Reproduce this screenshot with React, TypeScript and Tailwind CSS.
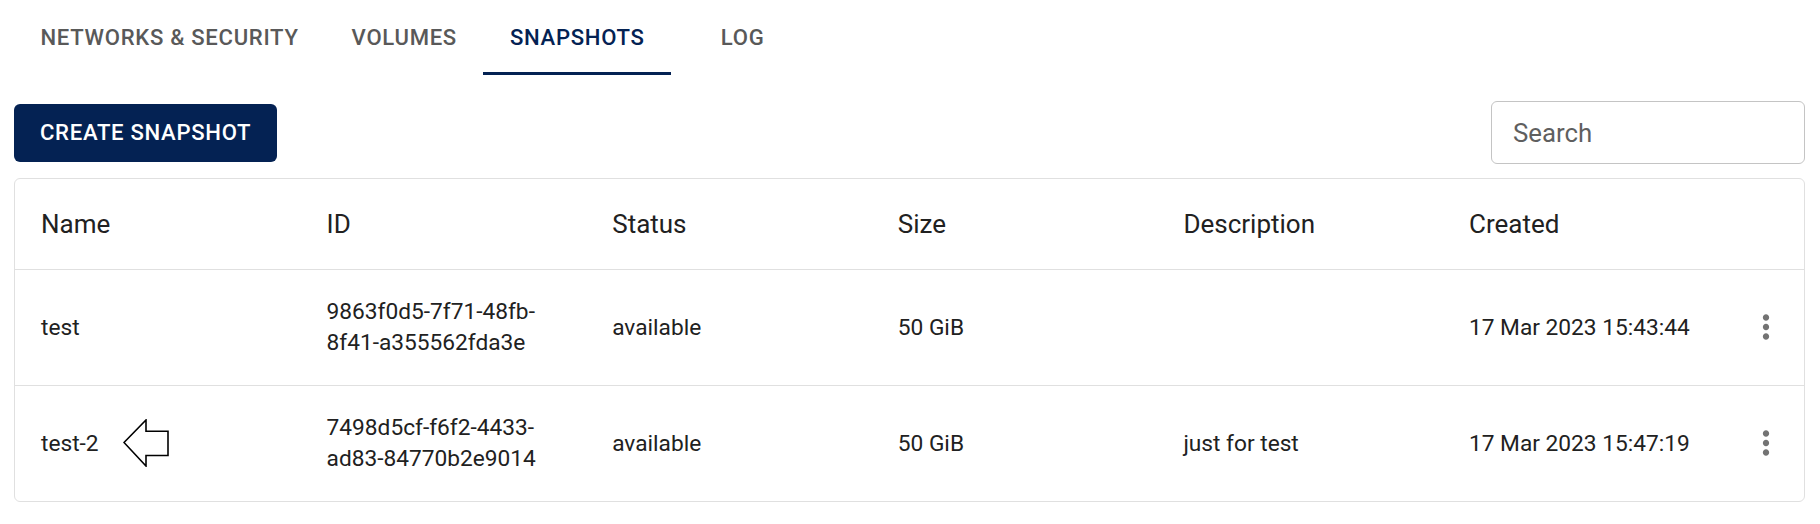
import { useState } from "react";

type Snapshot = {
  name: string;
  id: string;
  status: string;
  size: string;
  description: string;
  created: string;
  marked?: boolean;
};

const TABS = ["Networks & Security", "Volumes", "Snapshots", "Log"];

const COLUMNS = ["Name", "ID", "Status", "Size", "Description", "Created"];

const SNAPSHOTS: Snapshot[] = [
  {
    name: "test",
    id: "9863f0d5-7f71-48fb-8f41-a355562fda3e",
    status: "available",
    size: "50 GiB",
    description: "",
    created: "17 Mar 2023 15:43:44",
  },
  {
    name: "test-2",
    id: "7498d5cf-f6f2-4433-ad83-84770b2e9014",
    status: "available",
    size: "50 GiB",
    description: "just for test",
    created: "17 Mar 2023 15:47:19",
    marked: true,
  },
];

// let the long ids wrap after any hyphen
const breakable = (id: string) =>
  id.split("-").map((part, i, arr) => (
    <span key={i}>
      {part}
      {i < arr.length - 1 && (
        <>
          -<wbr />
        </>
      )}
    </span>
  ));

const ArrowMark = () => (
  <svg width="46" height="48" viewBox="0 0 46 48" className="shrink-0">
    <polygon
      points="1,23.5 23,1 23,12.3 45,12.3 45,36.5 23,36.5 23,47"
      fill="white"
      stroke="black"
      strokeWidth="1.6"
      strokeLinejoin="miter"
    />
  </svg>
);

const MoreVert = () => (
  <svg width="38" height="38" viewBox="0 0 24 24" fill="#737373">
    <path d="M12 8c1.1 0 2-.9 2-2s-.9-2-2-2-2 .9-2 2 .9 2 2 2zm0 2c-1.1 0-2 .9-2 2s.9 2 2 2 2-.9 2-2-.9-2-2-2zm0 6c-1.1 0-2 .9-2 2s.9 2 2 2 2-.9 2-2-.9-2-2-2z" />
  </svg>
);

const cell = "px-[26px] py-[26px] text-[22.7px] leading-[31.4px]";

export default function App() {
  const [tab, setTab] = useState("Snapshots");
  const [query, setQuery] = useState("");

  return (
    <div
      className="w-[1820px] h-[524px] bg-white pl-[14px] pr-[15px] text-[#212121]"
      style={{ fontFamily: "Roboto, 'Liberation Sans', sans-serif" }}
    >
      {/* Tabs */}
      <div className="flex h-[75px]">
        {TABS.map((t) => {
          const active = t === tab;
          return (
            <button
              key={t}
              onClick={() => setTab(t)}
              className={
                "relative min-w-[143px] px-[26.5px] flex items-center justify-center text-[22.1px] font-medium uppercase tracking-[0.7px] " +
                (active ? "text-[#042253]" : "text-[#595959]")
              }
            >
              {t}
              {active && <span className="absolute left-0 right-0 bottom-0 h-[3px] bg-[#042253]" />}
            </button>
          );
        })}
      </div>

      {/* Toolbar */}
      <div className="mt-[26px] flex items-center justify-between h-[63px]">
        <button className="h-[58px] px-[26px] rounded-[6px] bg-[#042253] text-white text-[22.1px] font-medium uppercase tracking-[0.7px] flex items-center">
          Create Snapshot
        </button>
        <input
          value={query}
          onChange={(e) => setQuery(e.target.value)}
          placeholder="Search"
          className="w-[314px] h-[63px] rounded-[6px] border border-[#c4c4c4] px-[21px] text-[25.8px] text-[#212121] placeholder:text-[#5f5f5f] outline-none"
        />
      </div>

      {/* Table */}
      <div className="mt-[14px] border border-[#e0e0e0] rounded-[6px] overflow-hidden">
        <table className="w-full table-fixed border-collapse">
          <colgroup>
            {COLUMNS.map((c) => (
              <col key={c} className="w-[285.6px]" />
            ))}
            <col />
          </colgroup>
          <thead>
            <tr className="border-b border-[#e0e0e0]">
              {COLUMNS.map((c) => (
                <th key={c} className="px-[26px] py-[26px] text-left text-[26px] leading-[38px] font-normal text-[#212121]">
                  {c}
                </th>
              ))}
              <th />
            </tr>
          </thead>
          <tbody>
            {SNAPSHOTS.map((s, i) => (
              <tr key={s.id} className={i < SNAPSHOTS.length - 1 ? "border-b border-[#e0e0e0]" : ""}>
                <td className={cell}>
                  <div className="flex items-center gap-[24px]">
                    <span>{s.name}</span>
                    {s.marked && <ArrowMark />}
                  </div>
                </td>
                <td className={cell}>{breakable(s.id)}</td>
                <td className={cell}>{s.status}</td>
                <td className={cell}>{s.size}</td>
                <td className={cell}>{s.description}</td>
                <td className={cell + " whitespace-nowrap"}>{s.created}</td>
                <td className="py-[26px]">
                  <div className="flex justify-center">
                    <MoreVert />
                  </div>
                </td>
              </tr>
            ))}
          </tbody>
        </table>
      </div>
    </div>
  );
}
